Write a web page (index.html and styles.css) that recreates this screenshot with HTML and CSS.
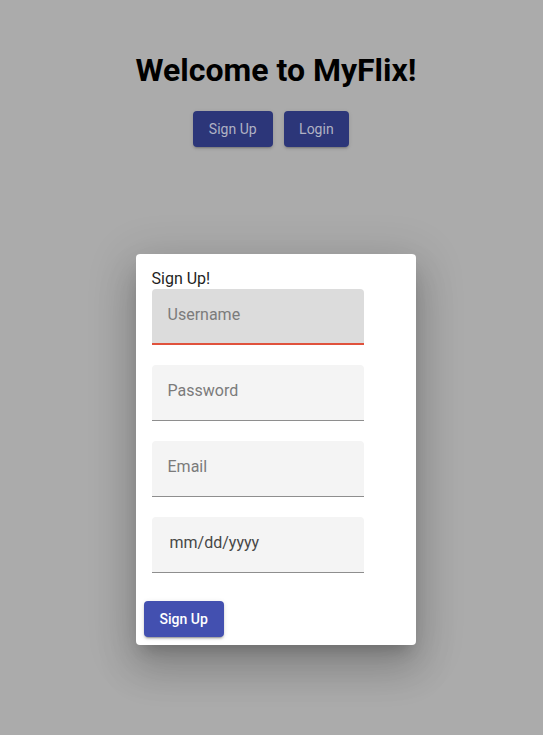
FILE: index.html
```html
<!DOCTYPE html>
<html lang="en">
<head>
<meta charset="utf-8">
<title>MyFlix</title>
<link rel="stylesheet" href="styles.css">
</head>
<body>
<main class="page">
  <div class="column">
    <h1 class="title">Welcome to MyFlix!</h1>
    <div class="nav-buttons">
      <button class="btn btn-dim">Sign Up</button>
      <button class="btn btn-dim btn-login">Login</button>
    </div>
    <form class="dialog">
      <div class="dialog-body">
        <div class="dialog-title">Sign Up!</div>
        <div class="fields">
          <input class="field field-focused" type="text" placeholder="Username">
          <input class="field" type="password" placeholder="Password">
          <input class="field" type="email" placeholder="Email">
          <input class="field field-date" type="text" placeholder="mm/dd/yyyy">
        </div>
      </div>
      <div class="dialog-actions">
        <button class="btn btn-primary" type="button">Sign Up</button>
      </div>
    </form>
  </div>
</main>
</body>
</html>
```
FILE: styles.css
```css
* { box-sizing: border-box; }

html, body {
  margin: 0;
  padding: 0;
}

body {
  background: #ababab;
  font-family: Roboto, "Liberation Sans", Arial, sans-serif;
  color: #212121;
  min-height: 735px;
}

.page {
  display: flex;
  justify-content: center;
  padding-top: 52px;
  padding-left: 9px;
}

.column {
  display: flex;
  flex-direction: column;
  align-items: stretch;
}

.title {
  margin: 0;
  font-size: 32px;
  font-weight: 700;
  line-height: 37.5px;
  color: #000;
  text-align: center;
  white-space: nowrap;
}

.nav-buttons {
  display: flex;
  justify-content: center;
  gap: 11px;
  margin: 21.5px 0 0 -10px;
}

.btn {
  height: 36px;
  padding: 0 16px;
  border: none;
  border-radius: 4px;
  font-family: Roboto, "Liberation Sans", Arial, sans-serif;
  font-size: 14px;
  line-height: 36px;
  cursor: pointer;
}

.btn-dim {
  background: #2c3679;
  color: #b0b2c4;
  font-weight: 400;
  box-shadow: 0 3px 1px -2px rgba(0,0,0,0.13), 0 2px 2px 0 rgba(0,0,0,0.1), 0 1px 5px 0 rgba(0,0,0,0.08);
}

.btn-login {
  padding: 0 15.5px;
}

.btn-primary {
  background: #4350b0;
  color: #fff;
  font-weight: 500;
  box-shadow: 0 3px 1px -2px rgba(0,0,0,0.2), 0 2px 2px 0 rgba(0,0,0,0.14), 0 1px 5px 0 rgba(0,0,0,0.12);
}

.dialog {
  margin: 107px 0 0 0;
  background: #fff;
  border-radius: 4px;
  box-shadow: 0 11px 15px -7px rgba(0,0,0,0.2), 0 24px 38px 3px rgba(0,0,0,0.14), 0 9px 46px 8px rgba(0,0,0,0.12);
  display: flex;
  flex-direction: column;
  width: 280px;
}

.dialog-body {
  padding: 16px 16px 0 16px;
}

.dialog-title {
  font-size: 16px;
  line-height: 18.75px;
  color: #1e1e1e;
}

.fields {
  display: flex;
  flex-direction: column;
  gap: 20px;
}

.field {
  display: block;
  width: 212px;
  height: 56px;
  margin: 0;
  padding: 16px 16px 20px 16px;
  border: none;
  border-bottom: 1px solid #8e8e8e;
  border-radius: 4px 4px 0 0;
  background: #f4f4f4;
  font-family: Roboto, "Liberation Sans", Arial, sans-serif;
  font-size: 16px;
  line-height: 19px;
  color: #212121;
  outline: none;
}

.field::placeholder {
  color: #7b7b7b;
  opacity: 1;
}

.field-focused {
  background: #dcdcdc;
  border-bottom: 2px solid #e0523c;
  padding-bottom: 19px;
}

.field-date {
  padding-left: 18px;
}

.field-date::placeholder {
  color: #474747;
}

.dialog-actions {
  display: flex;
  padding: 28px 8px 8px 8px;
}
```
